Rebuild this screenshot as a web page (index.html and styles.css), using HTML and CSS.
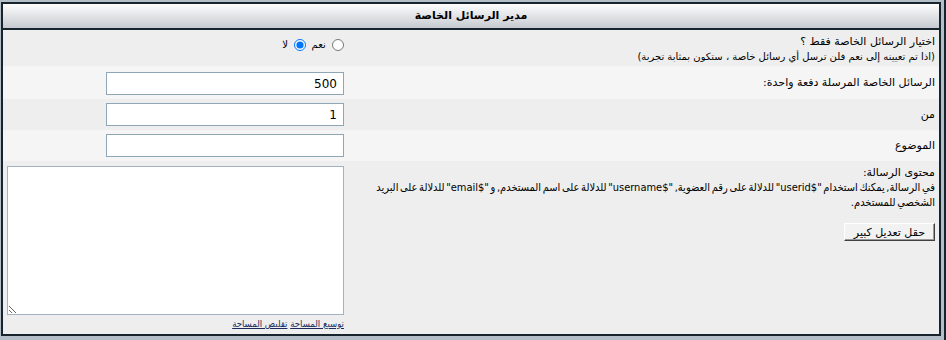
FILE: index.html
```html
<!DOCTYPE html>
<html dir="rtl" lang="ar">
<head>
    <meta charset="utf-8">
    <title>مدير الرسائل الخاصة</title>
    <link rel="stylesheet" href="styles.css">
</head>
<body>
    <div class="frame">
        <div class="panel">
            <div class="panel-head">مدير الرسائل الخاصة</div>

            <div class="row alt1 row-first">
                <div class="label">
                    <div>اختيار الرسائل الخاصة فقط ؟</div>
                    <div class="note">(اذا تم تعيينه إلى نعم فلن ترسل أي رسائل خاصة ، ستكون بمثابة تجربة)</div>
                </div>
                <div class="field field-top">
                    <label class="radio"><input type="radio" name="test"> نعم</label>
                    <label class="radio"><input type="radio" name="test" checked> لا</label>
                </div>
            </div>

            <div class="row alt2 row-second">
                <div class="label">الرسائل الخاصة المرسلة دفعة واحدة:</div>
                <div class="field"><input type="text" class="text-box" value="500" dir="ltr"></div>
            </div>

            <div class="row alt1">
                <div class="label">من</div>
                <div class="field"><input type="text" class="text-box" value="1" dir="ltr"></div>
            </div>

            <div class="row alt2">
                <div class="label">الموضوع</div>
                <div class="field"><input type="text" class="text-box" value=""></div>
            </div>

            <div class="row alt1 row-top">
                <div class="label">
                    <div>محتوى الرسالة:</div>
                    <div class="desc">في الرسالة, يمكنك استخدام "$userid" للدلالة على رقم العضوية, "$username" للدلالة على اسم المستخدم, و "$email" للدلالة على البريد الشخصي للمستخدم.</div>
                    <button class="small-btn">حقل تعديل كبير</button>
                </div>
                <div class="field field-area">
                    <textarea class="message-box"></textarea>
                    <div class="size-links">
                        <a href="#">توسيع المساحة</a> <a href="#">تقليص المساحة</a>
                    </div>
                </div>
            </div>
        </div>
    </div>
</body>
</html>
```

FILE: styles.css
```css
html {
    background: #b3bec7;
}
body {
    margin: 0;
    font-family: "DejaVu Sans", Tahoma, sans-serif;
    font-size: 11px;
    color: #000;
}
.frame {
    height: 338px;
    border-bottom: 2px solid #17232d;
    border-right: 2px solid #17232d;
    padding: 2px 3px 0 1px;
}
.panel {
    border: 2px solid #17232d;
    height: 330px;
    background: #eeeeee;
    overflow: hidden;
}
.panel-head {
    height: 24px;
    line-height: 24px;
    text-align: center;
    font-weight: bold;
    font-size: 11px;
    background: linear-gradient(#fdfdfd, #c6cad0);
    border-bottom: 2px solid #17232d;
}
.row {
    display: grid;
    grid-template-columns: 587px 1fr;
    align-items: center;
}
.alt1 {
    background: #eeeeee;
}
.alt2 {
    background: #f5f5f5;
}
.row-first .label {
    padding: 4px 4px 2px;
}
.row-second .field {
    padding-top: 6px;
}
.row-top {
    align-items: start;
}
.label {
    padding: 3px 4px;
    line-height: 15px;
}
.note {
    font-size: 10px;
}
.field {
    padding: 4px 8px 4px 6px;
    text-align: right;
}
.field-top {
    align-self: start;
    padding-top: 8px;
}
.radio {
    font-size: 10px;
    margin-left: 2px;
}
.radio input {
    width: 12px;
    height: 12px;
    margin: 0 0 0 3px;
    vertical-align: middle;
}
.text-box {
    display: block;
    width: 238px;
    height: 23px;
    box-sizing: border-box;
    border: 1px solid #8fa6b7;
    background: #fff;
    font-family: Verdana, "DejaVu Sans", sans-serif;
    font-size: 12px;
    padding: 2px 6px;
    text-align: right;
    margin: 0;
}
.row-top .label {
    padding-top: 4px;
}
.desc {
    font-family: "DejaVu Sans Condensed", "DejaVu Sans", sans-serif;
    font-stretch: condensed;
    word-spacing: -1.5px;
    margin-bottom: 13px;
    margin-left: -4px;
}
.small-btn {
    font-family: "DejaVu Sans", Tahoma, sans-serif;
    font-size: 11px;
    padding: 0 9px;
    height: 18px;
    background: #f2f2f2;
    border: 1px solid;
    border-color: #fff #404040 #404040 #fff;
    box-shadow: inset -1px -1px 0 #9a9a9a;
}
.field-area {
    padding-top: 5px;
}
.message-box {
    display: block;
    width: 337px;
    height: 149px;
    box-sizing: border-box;
    border: 1px solid #a4b2bf;
    margin: 0;
    background: #fff;
}
.size-links {
    padding-top: 3px;
    font-family: "DejaVu Sans Condensed", "DejaVu Sans", sans-serif;
    font-stretch: condensed;
    font-size: 9.5px;
}
.size-links a {
    color: #1a2a5c;
}
```
